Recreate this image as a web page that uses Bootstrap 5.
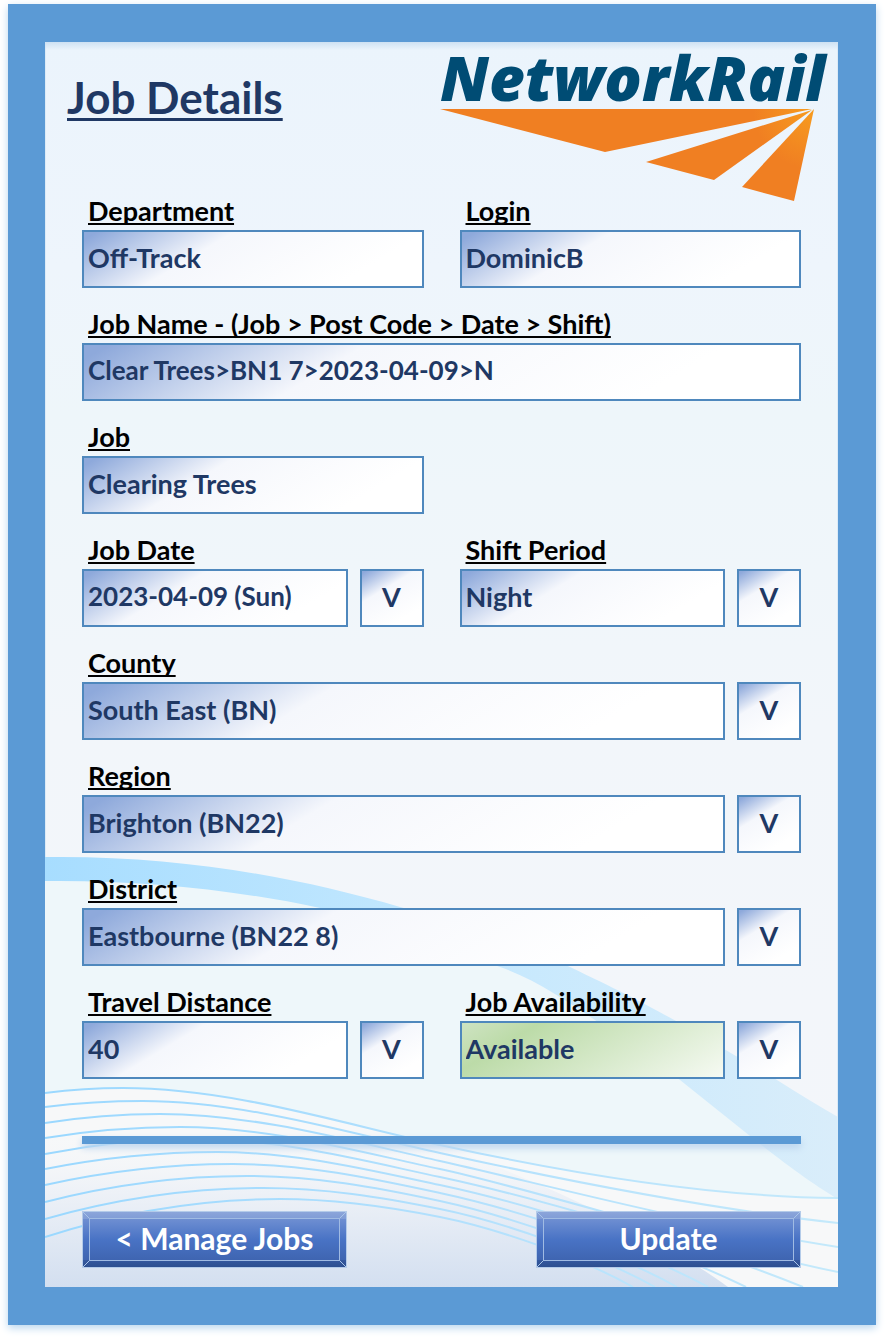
<!DOCTYPE html>
<html lang="en">
<head>
<meta charset="utf-8">
<meta name="viewport" content="width=device-width, initial-scale=1">
<title>Job Details</title>
<link href="https://cdn.jsdelivr.net/npm/bootstrap@5.3.0/dist/css/bootstrap.min.css" rel="stylesheet">
<style>
  :root { --frame: #5b9ad5; --ink: #1f3864; --edge: #4f88bd; }
  body { background: #fff; font-family: Lato, "Open Sans", sans-serif; font-weight: 700; color: var(--ink); }
  .app-frame { margin: 4px 9px 14px 8px; padding: 38px 38px 38px 37px; background: var(--frame); box-shadow: 0 3px 8px #b9d6ee; }
  .panel { position: relative; isolation: isolate; background: linear-gradient(#ebf4fc, #eef5fc 18%, #eef6fa 30%, #f2f6fa 55%, #f4f6fa); box-shadow: inset 0 0 0 1px #dcebf7; }
  .panel::before { content: ""; position: absolute; inset: 0 0 auto; height: 8px; background: linear-gradient(#cfe2f3, transparent); }
  .waves { position: absolute; inset: 0; width: 100%; height: 100%; z-index: -1; }
  .page-head { padding: 0 8px 0 22px; }
  .page-title { margin: 31px 0 0; font-size: 44px; line-height: 48px; font-weight: 700; text-decoration: underline; text-decoration-thickness: 3px; text-underline-offset: 4px; text-decoration-skip-ink: none; }
  .logo { width: 390px; height: 155px; overflow: visible; flex: none; }
  .logo text { font: italic 800 62px "Open Sans", sans-serif; }
  .page-body { padding: 0 37px 19px; }
  .form-grid { display: grid; grid-template-columns: repeat(2, minmax(0, 1fr)); column-gap: 36px; row-gap: 22px; }
  .wide { grid-column: 1 / -1; }
  .field-label { display: block; margin: 0 0 5px 6px; font-size: 27px; line-height: 28px; color: #000; text-decoration: underline; text-decoration-thickness: 2px; text-underline-offset: 2px; text-decoration-skip-ink: none; }
  .field-line { display: flex; gap: 12px; }
  .box, .box:focus { flex: 1; min-width: 0; height: 58px; padding: 0 4px 4px; border: 2px solid var(--edge); border-radius: 0; font-size: 27px; line-height: 50px; font-weight: 700; color: var(--ink); background: linear-gradient(149deg, #8ea9db 3%, #f5f7fc 35%, #fff 80%); appearance: none; }
  select.box { padding-bottom: 2px; line-height: 52px; }
  .box.digits { font-size: 26px; }
  .box.pick { flex: 0 0 64px; padding: 0 0 2px; text-align: center; }
  .box.ok { background: linear-gradient(149deg, #cee3c2, #bcdba8 22%, #f6faf3); }
  .divider { height: 8px; margin: 57px 0 67px; background: var(--frame); box-shadow: 0 4px 7px #bcd5ee; }
  .bevel { position: relative; width: 265px; height: 57px; padding: 0 0 4px; border: 1px solid #b4cbe9; border-radius: 0; font-size: 30px; line-height: 50px; font-weight: 700; color: #fff;
    background:
      linear-gradient(45deg, transparent 44%, #a9c4e8 44% 56%, transparent 56%) right top / 7px 7px no-repeat,
      linear-gradient(45deg, transparent 44%, #a9c4e8 44% 56%, transparent 56%) left bottom / 7px 7px no-repeat,
      linear-gradient(-45deg, transparent 44%, #a9c4e8 44% 56%, transparent 56%) left top / 7px 7px no-repeat,
      linear-gradient(-45deg, transparent 44%, #a9c4e8 44% 56%, transparent 56%) right bottom / 7px 7px no-repeat,
      linear-gradient(#8ba5da, #809cd6) top / 100% 7px no-repeat,
      linear-gradient(#34589f, #2d4f90) bottom / 100% 7px no-repeat,
      linear-gradient(#7b98d6, #4973c5 50%, #3b60aa); }
  /* the corner strokes run from top-left to bottom-right and mirror on the other two corners */
  .bevel { background-position: right top, left bottom, left top, right bottom, top, bottom, center; background-image:
      linear-gradient(-45deg, transparent 44%, #a9c4e8 44% 56%, transparent 56%),
      linear-gradient(-45deg, transparent 44%, #a9c4e8 44% 56%, transparent 56%),
      linear-gradient(45deg, transparent 44%, #a9c4e8 44% 56%, transparent 56%),
      linear-gradient(45deg, transparent 44%, #a9c4e8 44% 56%, transparent 56%),
      linear-gradient(#8ba5da, #809cd6), linear-gradient(#34589f, #2d4f90), linear-gradient(#7b98d6, #4973c5 50%, #3b60aa); }
  .bevel::after { content: ""; position: absolute; inset: 6px; border: 1px solid #a0bbe3; }
</style>
</head>
<body>
<main class="app-frame">
  <div class="panel">
    <svg class="waves" viewBox="45 42 793 1245" preserveAspectRatio="none" aria-hidden="true">
      <defs>
        <linearGradient id="band" x1="0" x2="1"><stop offset="0" stop-color="#a7ddff"/><stop offset=".5" stop-color="#c4e8fe"/><stop offset="1" stop-color="#d9edfa"/></linearGradient>
        <linearGradient id="shade" x1="0" y1="1130" x2="0" y2="1287" gradientUnits="userSpaceOnUse"><stop offset="0" stop-color="#f7f8f9" stop-opacity="0"/><stop offset=".4" stop-color="#edf1f7"/><stop offset="1" stop-color="#d3dff0"/></linearGradient>
        <linearGradient id="stroke" x1="45" x2="838" y1="0" y2="0" gradientUnits="userSpaceOnUse"><stop offset="0" stop-color="#9ad8ff"/><stop offset=".5" stop-color="#b2e0fd"/><stop offset="1" stop-color="#c4e9fb"/></linearGradient>
      </defs>
      <path fill="#eef7fa" d="M45 881C140 878 230 889 320 908S460 952 500 967 570 1003 598 1022 652 1060 680 1080 730 1121 750 1136 810 1181 838 1199V1287H45Z"/>
      <path fill="url(#band)" d="M45 857C180 855 300 878 400 907 460 923 520 943 570 967S640 1001 678 1022L777 1080Q810 1101 838 1117V1199C810 1183 770 1152 750 1136L680 1080C652 1060 626 1040 598 1022S540 981 500 967 410 927 320 908 140 880 45 881Z"/>
      <path fill="#f7f8f9" d="M45 1093Q84 1088 123 1088C230 1088 340 1123 440 1145S700 1197 838 1198V1287H45Z"/>
      <path fill="url(#shade)" d="M45 1110H330C440 1138 630 1215 728 1287H45Z"/>
      <g fill="none" stroke="url(#stroke)" stroke-width="2">
        <path d="M45 1093Q84 1088 123 1088C230 1088 340 1123 440 1145S700 1197 838 1198"/>
        <path d="M45 1107Q94 1101 143 1101C240 1101 345 1132 440 1153S700 1208 838 1223"/>
        <path d="M45 1123Q102 1114 160 1114C255 1114 350 1141 440 1161S700 1226 838 1247"/>
        <path d="M45 1138Q112 1127 180 1127C270 1127 355 1151 440 1169S720 1248 838 1272"/>
        <path d="M45 1154Q121 1139 197 1139C280 1139 360 1160 440 1177S690 1241 803 1287"/>
        <path d="M45 1169Q131 1152 217 1152C295 1152 365 1169 440 1185S650 1240 746 1287"/>
        <path d="M45 1185Q139 1164 233 1164C305 1164 370 1178 440 1193S635 1247 708 1287"/>
        <path d="M45 1202Q146 1176 247 1176C315 1176 375 1187 440 1201S615 1252 677 1287"/>
        <path d="M45 1219Q154 1188 263 1188C325 1188 380 1197 440 1209S600 1256 655 1287"/>
        <path d="M45 1237Q162 1199 280 1199C335 1199 385 1206 440 1217S580 1257 633 1287"/>
      </g>
    </svg>

    <header class="page-head d-flex justify-content-between align-items-start">
      <h1 class="page-title">Job Details</h1>
      <svg class="logo" viewBox="440 42 390 155" role="img" aria-label="NetworkRail">
        <defs><radialGradient id="glow" cx="813" cy="109" r="60" gradientUnits="userSpaceOnUse"><stop offset="0" stop-color="#f79c1f"/><stop offset="1" stop-color="#f07f22"/></radialGradient></defs>
        <text x="440" y="101" fill="#004c74">NetworkRail</text>
        <g fill="url(#glow)">
          <path d="M440 109H812L605 152Z"/>
          <path d="M812 110L646 162 714 180Z"/>
          <path d="M814 109L742 187 794 201Z"/>
        </g>
      </svg>
    </header>

    <div class="page-body">
      <form class="form-grid">
        <div>
          <label class="field-label" for="dept">Department</label>
          <div class="field-line"><input class="box" id="dept" type="text" value="Off-Track"></div>
        </div>
        <div>
          <label class="field-label" for="login">Login</label>
          <div class="field-line"><input class="box" id="login" type="text" value="DominicB"></div>
        </div>
        <div class="wide">
          <label class="field-label" for="jobname">Job Name - (Job &gt; Post Code &gt; Date &gt; Shift)</label>
          <div class="field-line"><input class="box digits" id="jobname" type="text" value="Clear Trees&gt;BN1 7&gt;2023-04-09&gt;N"></div>
        </div>
        <div>
          <label class="field-label" for="job">Job</label>
          <div class="field-line"><input class="box" id="job" type="text" value="Clearing Trees"></div>
        </div>
        <div></div>
        <div>
          <label class="field-label" for="date">Job Date</label>
          <div class="field-line"><input class="box digits" id="date" type="text" value="2023-04-09 (Sun)"><button class="box pick" type="button">V</button></div>
        </div>
        <div>
          <label class="field-label" for="shift">Shift Period</label>
          <div class="field-line"><select class="box" id="shift"><option>Night</option></select><button class="box pick" type="button">V</button></div>
        </div>
        <div class="wide">
          <label class="field-label" for="county">County</label>
          <div class="field-line"><select class="box" id="county"><option>South East (BN)</option></select><button class="box pick" type="button">V</button></div>
        </div>
        <div class="wide">
          <label class="field-label" for="region">Region</label>
          <div class="field-line"><select class="box" id="region"><option>Brighton (BN22)</option></select><button class="box pick" type="button">V</button></div>
        </div>
        <div class="wide">
          <label class="field-label" for="district">District</label>
          <div class="field-line"><select class="box" id="district"><option>Eastbourne (BN22 8)</option></select><button class="box pick" type="button">V</button></div>
        </div>
        <div>
          <label class="field-label" for="distance">Travel Distance</label>
          <div class="field-line"><select class="box" id="distance"><option>40</option></select><button class="box pick" type="button">V</button></div>
        </div>
        <div>
          <label class="field-label" for="avail">Job Availability</label>
          <div class="field-line"><select class="box ok" id="avail"><option>Available</option></select><button class="box pick" type="button">V</button></div>
        </div>
      </form>
      <div class="divider"></div>
      <div class="d-flex justify-content-between">
        <button class="bevel" type="button">&lt; Manage Jobs</button>
        <button class="bevel" type="button">Update</button>
      </div>
    </div>
  </div>
</main>
<script src="https://cdn.jsdelivr.net/npm/bootstrap@5.3.0/dist/js/bootstrap.bundle.min.js"></script>
</body>
</html>
